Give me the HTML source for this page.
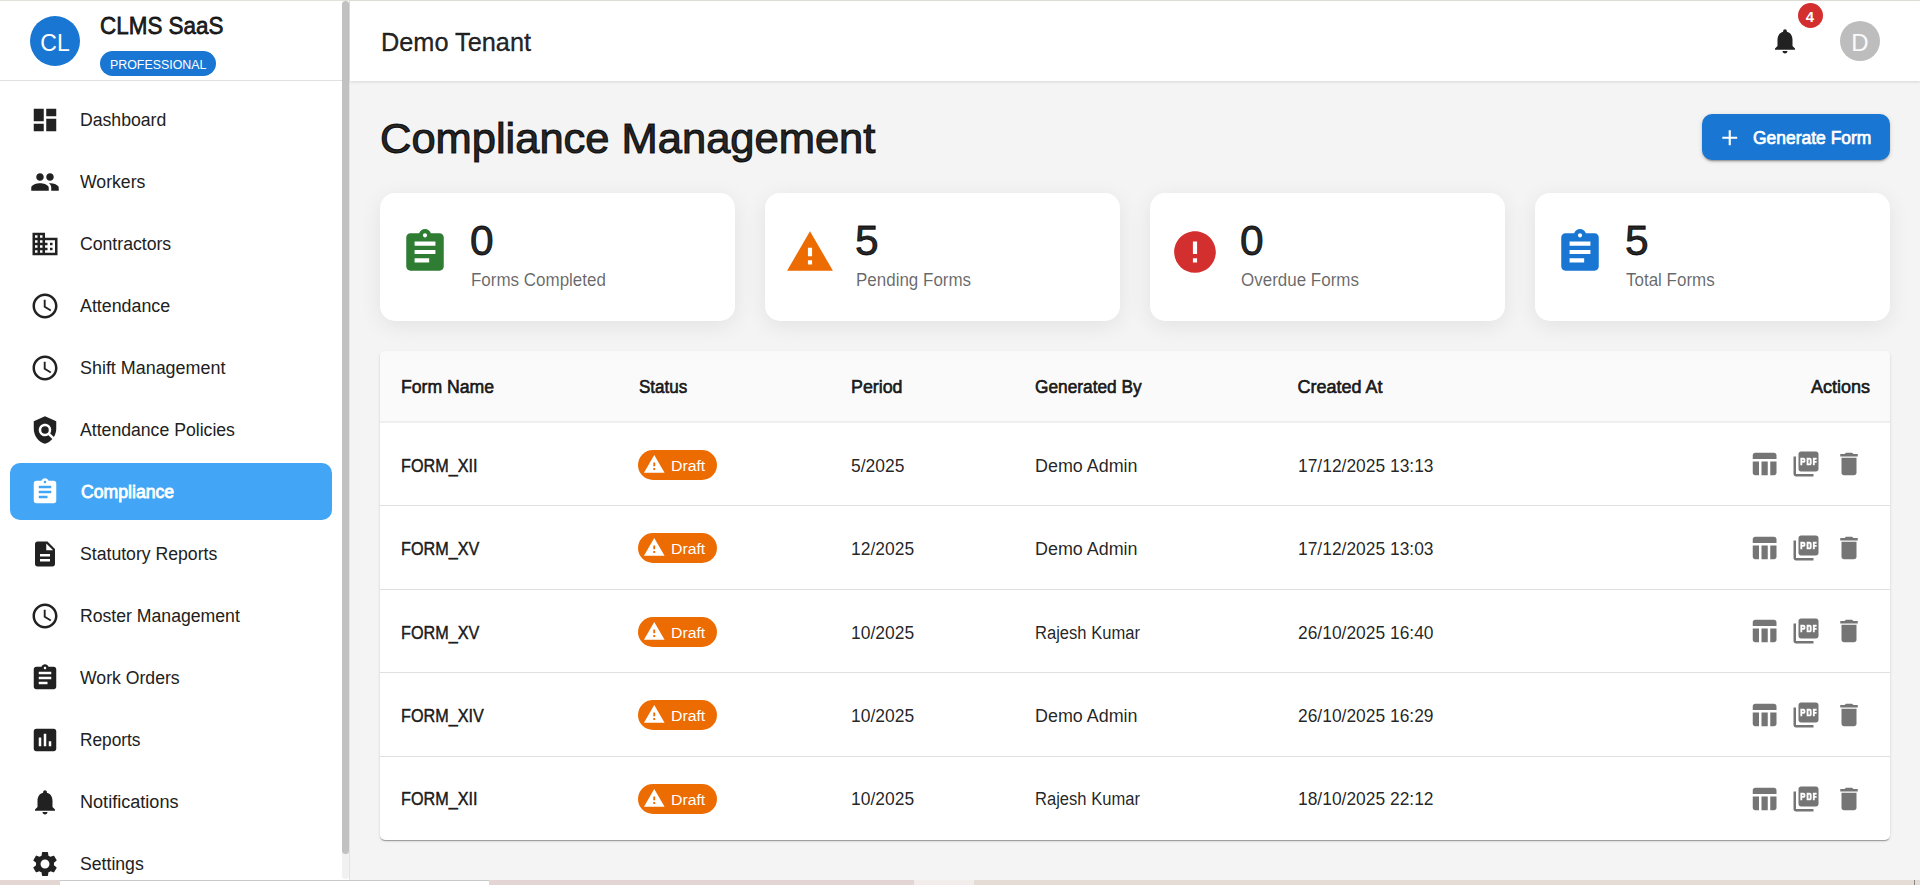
<!DOCTYPE html>
<html><head><meta charset="utf-8"><title>Compliance Management</title>
<style>
html,body{margin:0;padding:0;width:1920px;height:885px;overflow:hidden;background:#f4f4f4;font-family:"Liberation Sans", sans-serif;}
*{box-sizing:border-box;}
.abs{position:absolute;}
</style></head><body>
<div class="abs" style="left:0;top:0;width:1920px;height:1px;background:#dfe2d9"></div>
<div class="abs" style="left:0;top:1px;width:350px;height:879px;background:#fff;border-right:1px solid #e3e3e3"></div>
<div class="abs" style="left:0;top:80px;width:342px;height:1px;background:#e0e0e0"></div>
<div class="abs" style="left:342px;top:1px;width:7px;height:878px;background:#f1f1f1;border-radius:4px"></div>
<div class="abs" style="left:342px;top:1px;width:7px;height:853px;background:#c1c1c1;border-radius:4px"></div>
<div class="abs" style="left:30px;top:16px;width:50px;height:50px;border-radius:50%;background:#1976d2"></div>
<div style="position:absolute;top:31.53px;font-size:23px;line-height:23px;font-weight:400;color:#fff;white-space:nowrap;left:55.00px;width:0;display:flex;justify-content:center;">CL</div>
<div style="position:absolute;top:14.08px;font-size:24px;line-height:24px;font-weight:400;color:rgba(0,0,0,0.87);white-space:nowrap;left:100.00px;transform:scaleX(0.935);transform-origin:left center;-webkit-text-stroke:0.8px rgba(0,0,0,0.87);">CLMS SaaS</div>
<div class="abs" style="left:100px;top:51px;width:116px;height:25px;border-radius:13px;background:#1976d2"></div>
<div style="position:absolute;top:57.58px;font-size:13.2px;line-height:13.2px;font-weight:400;color:#fff;white-space:nowrap;left:110.00px;transform:scaleX(0.94);transform-origin:left center;">PROFESSIONAL</div>
<svg style="position:absolute;left:30px;top:105px" width="30" height="30" viewBox="0 0 24 24"><path fill="#212121" d="M3 13h8V3H3zm0 8h8v-6H3zm10 0h8V11h-8zm0-18v6h8V3z"/></svg>
<div style="position:absolute;top:111.06px;font-size:18px;line-height:18px;font-weight:400;color:#212121;white-space:nowrap;left:80.30px;transform:scaleX(0.98);transform-origin:left center;">Dashboard</div>
<svg style="position:absolute;left:30px;top:167px" width="30" height="30" viewBox="0 0 24 24"><path fill="#212121" d="M16 11c1.66 0 2.99-1.34 2.99-3S17.66 5 16 5c-1.66 0-3 1.34-3 3s1.34 3 3 3m-8 0c1.66 0 2.99-1.34 2.99-3S9.66 5 8 5C6.34 5 5 6.34 5 8s1.34 3 3 3m0 2c-2.33 0-7 1.17-7 3.5V19h14v-2.5c0-2.33-4.67-3.5-7-3.5m8 0c-.29 0-.62.02-.97.05 1.16.84 1.97 1.97 1.97 3.45V19h6v-2.5c0-2.33-4.67-3.5-7-3.5"/></svg>
<div style="position:absolute;top:173.06px;font-size:18px;line-height:18px;font-weight:400;color:#212121;white-space:nowrap;left:80.30px;transform:scaleX(0.98);transform-origin:left center;">Workers</div>
<svg style="position:absolute;left:30px;top:229px" width="30" height="30" viewBox="0 0 24 24"><path fill="#212121" d="M12 7V3H2v18h20V7zM6 19H4v-2h2zm0-4H4v-2h2zm0-4H4V9h2zm0-4H4V5h2zm4 12H8v-2h2zm0-4H8v-2h2zm0-4H8V9h2zm0-4H8V5h2zm10 12h-8v-2h2v-2h-2v-2h2v-2h-2V9h8zm-2-8h-2v2h2zm0 4h-2v2h2z"/></svg>
<div style="position:absolute;top:235.06px;font-size:18px;line-height:18px;font-weight:400;color:#212121;white-space:nowrap;left:80.30px;transform:scaleX(0.98);transform-origin:left center;">Contractors</div>
<svg style="position:absolute;left:30px;top:291px" width="30" height="30" viewBox="0 0 24 24"><path fill="#212121" d="M11.99 2C6.47 2 2 6.48 2 12s4.47 10 9.99 10C17.52 22 22 17.52 22 12S17.52 2 11.99 2M12 20c-4.42 0-8-3.58-8-8s3.58-8 8-8 8 3.58 8 8-3.58 8-8 8M12.5 7H11v6l5.25 3.15.75-1.23-4.5-2.67z"/></svg>
<div style="position:absolute;top:297.06px;font-size:18px;line-height:18px;font-weight:400;color:#212121;white-space:nowrap;left:80.30px;transform:scaleX(0.99);transform-origin:left center;">Attendance</div>
<svg style="position:absolute;left:30px;top:353px" width="30" height="30" viewBox="0 0 24 24"><path fill="#212121" d="M11.99 2C6.47 2 2 6.48 2 12s4.47 10 9.99 10C17.52 22 22 17.52 22 12S17.52 2 11.99 2M12 20c-4.42 0-8-3.58-8-8s3.58-8 8-8 8 3.58 8 8-3.58 8-8 8M12.5 7H11v6l5.25 3.15.75-1.23-4.5-2.67z"/></svg>
<div style="position:absolute;top:359.06px;font-size:18px;line-height:18px;font-weight:400;color:#212121;white-space:nowrap;left:80.30px;transform:scaleX(0.995);transform-origin:left center;">Shift Management</div>
<svg style="position:absolute;left:30px;top:415px" width="30" height="30" viewBox="0 0 24 24"><path fill="#212121" d="M21 5l-9-4-9 4v6c0 5.55 3.84 10.74 9 12 2.3-.56 4.33-1.9 5.88-3.71l-3.12-3.12c-1.94 1.29-4.58 1.07-6.29-.64-1.95-1.95-1.95-5.12 0-7.07s5.12-1.95 7.07 0c1.71 1.71 1.92 4.35.64 6.29l2.9 2.9C20.29 15.69 21 13.38 21 11zM12 9a3 3 0 1 0 0 6 3 3 0 1 0 0-6"/></svg>
<div style="position:absolute;top:421.06px;font-size:18px;line-height:18px;font-weight:400;color:#212121;white-space:nowrap;left:80.30px;transform:scaleX(0.98);transform-origin:left center;">Attendance Policies</div>
<div class="abs" style="left:10px;top:463px;width:322px;height:57px;border-radius:10px;background:#42a5f5"></div>
<svg style="position:absolute;left:30px;top:477px" width="30" height="30" viewBox="0 0 24 24"><path fill="#fff" d="M19 3h-4.18C14.4 1.84 13.3 1 12 1s-2.4.84-2.82 2H5c-1.1 0-2 .9-2 2v14c0 1.1.9 2 2 2h14c1.1 0 2-.9 2-2V5c0-1.1-.9-2-2-2m-7 0c.55 0 1 .45 1 1s-.45 1-1 1-1-.45-1-1 .45-1 1-1m2 14H7v-2h7zm3-4H7v-2h10zm0-4H7V7h10z"/></svg>
<div style="position:absolute;top:483.06px;font-size:18px;line-height:18px;font-weight:400;color:#fff;white-space:nowrap;left:80.50px;transform:scaleX(0.98);transform-origin:left center;-webkit-text-stroke:0.8px #fff;">Compliance</div>
<svg style="position:absolute;left:30px;top:539px" width="30" height="30" viewBox="0 0 24 24"><path fill="#212121" d="M14 2H6c-1.1 0-1.99.9-1.99 2L4 20c0 1.1.89 2 1.99 2H18c1.1 0 2-.9 2-2V8zm2 16H8v-2h8zm0-4H8v-2h8zm-3-5V3.5L18.5 9z"/></svg>
<div style="position:absolute;top:545.06px;font-size:18px;line-height:18px;font-weight:400;color:#212121;white-space:nowrap;left:80.30px;transform:scaleX(0.98);transform-origin:left center;">Statutory Reports</div>
<svg style="position:absolute;left:30px;top:601px" width="30" height="30" viewBox="0 0 24 24"><path fill="#212121" d="M11.99 2C6.47 2 2 6.48 2 12s4.47 10 9.99 10C17.52 22 22 17.52 22 12S17.52 2 11.99 2M12 20c-4.42 0-8-3.58-8-8s3.58-8 8-8 8 3.58 8 8-3.58 8-8 8M12.5 7H11v6l5.25 3.15.75-1.23-4.5-2.67z"/></svg>
<div style="position:absolute;top:607.06px;font-size:18px;line-height:18px;font-weight:400;color:#212121;white-space:nowrap;left:80.30px;transform:scaleX(0.98);transform-origin:left center;">Roster Management</div>
<svg style="position:absolute;left:30px;top:663px" width="30" height="30" viewBox="0 0 24 24"><path fill="#212121" d="M19 3h-4.18C14.4 1.84 13.3 1 12 1s-2.4.84-2.82 2H5c-1.1 0-2 .9-2 2v14c0 1.1.9 2 2 2h14c1.1 0 2-.9 2-2V5c0-1.1-.9-2-2-2m-7 0c.55 0 1 .45 1 1s-.45 1-1 1-1-.45-1-1 .45-1 1-1m2 14H7v-2h7zm3-4H7v-2h10zm0-4H7V7h10z"/></svg>
<div style="position:absolute;top:669.06px;font-size:18px;line-height:18px;font-weight:400;color:#212121;white-space:nowrap;left:80.30px;transform:scaleX(0.98);transform-origin:left center;">Work Orders</div>
<svg style="position:absolute;left:30px;top:725px" width="30" height="30" viewBox="0 0 24 24"><path fill="#212121" d="M19 3H5c-1.1 0-2 .9-2 2v14c0 1.1.9 2 2 2h14c1.1 0 2-.9 2-2V5c0-1.1-.9-2-2-2M9 17H7v-7h2zm4 0h-2V7h2zm4 0h-2v-4h2z"/></svg>
<div style="position:absolute;top:731.06px;font-size:18px;line-height:18px;font-weight:400;color:#212121;white-space:nowrap;left:80.30px;transform:scaleX(0.96);transform-origin:left center;">Reports</div>
<svg style="position:absolute;left:30px;top:787px" width="30" height="30" viewBox="0 0 24 24"><path fill="#212121" d="M12 22c1.1 0 2-.9 2-2h-4c0 1.1.89 2 2 2m6-6v-5c0-3.07-1.64-5.64-4.5-6.32V4c0-.83-.67-1.5-1.5-1.5s-1.5.67-1.5 1.5v.68C7.63 5.36 6 7.92 6 11v5l-2 2v1h16v-1z"/></svg>
<div style="position:absolute;top:793.06px;font-size:18px;line-height:18px;font-weight:400;color:#212121;white-space:nowrap;left:80.30px;transform:scaleX(1.005);transform-origin:left center;">Notifications</div>
<svg style="position:absolute;left:30px;top:849px" width="30" height="30" viewBox="0 0 24 24"><path fill="#212121" d="M19.14 12.94c.04-.3.06-.61.06-.94 0-.32-.02-.64-.07-.94l2.03-1.58c.18-.14.23-.41.12-.61l-1.92-3.32c-.12-.22-.37-.29-.59-.22l-2.39.96c-.5-.38-1.03-.7-1.62-.94l-.36-2.54c-.04-.24-.24-.41-.48-.41h-3.84c-.24 0-.43.17-.47.41l-.36 2.54c-.59.24-1.13.57-1.62.94l-2.39-.96c-.22-.08-.47 0-.59.22L2.74 8.87c-.12.21-.08.47.12.61l2.03 1.58c-.05.3-.09.63-.09.94s.02.64.07.94l-2.03 1.58c-.18.14-.23.41-.12.61l1.92 3.32c.12.22.37.29.59.22l2.39-.96c.5.38 1.03.7 1.62.94l.36 2.54c.05.24.24.41.48.41h3.84c.24 0 .44-.17.47-.41l.36-2.54c.59-.24 1.13-.56 1.62-.94l2.39.96c.22.08.47 0 .59-.22l1.92-3.32c.12-.22.07-.47-.12-.61zM12 15.6c-1.98 0-3.6-1.62-3.6-3.6s1.62-3.6 3.6-3.6 3.6 1.62 3.6 3.6-1.62 3.6-3.6 3.6"/></svg>
<div style="position:absolute;top:855.06px;font-size:18px;line-height:18px;font-weight:400;color:#212121;white-space:nowrap;left:80.30px;transform:scaleX(0.98);transform-origin:left center;">Settings</div>
<div class="abs" style="left:350px;top:1px;width:1570px;height:80px;background:#fff;box-shadow:0 1px 3px rgba(0,0,0,0.12)"></div>
<div style="position:absolute;top:29.74px;font-size:25px;line-height:25px;font-weight:400;color:rgba(0,0,0,0.87);white-space:nowrap;left:380.50px;transform:scaleX(1.012);transform-origin:left center;-webkit-text-stroke:0.35px rgba(0,0,0,0.87);">Demo Tenant</div>
<svg style="position:absolute;left:1770px;top:26px" width="30" height="30" viewBox="0 0 24 24"><path fill="#212121" d="M12 22c1.1 0 2-.9 2-2h-4c0 1.1.89 2 2 2m6-6v-5c0-3.07-1.64-5.64-4.5-6.32V4c0-.83-.67-1.5-1.5-1.5s-1.5.67-1.5 1.5v.68C7.63 5.36 6 7.92 6 11v5l-2 2v1h16v-1z"/></svg>
<div class="abs" style="left:1797.5px;top:3px;width:25px;height:25px;border-radius:50%;background:#d32f2f"></div>
<div style="position:absolute;top:8.80px;font-size:15px;line-height:15px;font-weight:700;color:#fff;white-space:nowrap;left:1810.00px;width:0;display:flex;justify-content:center;">4</div>
<div class="abs" style="left:1840px;top:21px;width:40px;height:40px;border-radius:50%;background:#bdbdbd"></div>
<div style="position:absolute;top:31.48px;font-size:24px;line-height:24px;font-weight:400;color:#fafafa;white-space:nowrap;left:1860.00px;width:0;display:flex;justify-content:center;">D</div>
<div style="position:absolute;top:118.05px;font-size:42px;line-height:42px;font-weight:400;color:rgba(0,0,0,0.87);white-space:nowrap;left:380.30px;transform:scaleX(1.035);transform-origin:left center;-webkit-text-stroke:1.1px rgba(0,0,0,0.87);">Compliance Management</div>
<div class="abs" style="left:1702px;top:114px;width:188px;height:46px;border-radius:10px;background:#1976d2;box-shadow:0 3px 1px -2px rgba(0,0,0,0.2),0 2px 2px 0 rgba(0,0,0,0.14),0 1px 5px 0 rgba(0,0,0,0.12)"></div>
<svg style="position:absolute;left:1717px;top:125px" width="25.5" height="25.5" viewBox="0 0 24 24"><path fill="#fff" d="M19 13h-6v6h-2v-6H5v-2h6V5h2v6h6z"/></svg>
<div style="position:absolute;top:128.76px;font-size:18px;line-height:18px;font-weight:400;color:#fff;white-space:nowrap;left:1752.50px;transform:scaleX(0.97);transform-origin:left center;-webkit-text-stroke:0.7px #fff;">Generate Form</div>
<div class="abs" style="left:380px;top:193px;width:355px;height:128px;border-radius:15px;background:#fff;box-shadow:0 5px 22px rgba(0,0,0,0.075)"></div>
<svg style="position:absolute;left:400px;top:227px" width="50" height="50" viewBox="0 0 24 24"><path fill="#2e7d32" d="M19 3h-4.18C14.4 1.84 13.3 1 12 1s-2.4.84-2.82 2H5c-1.1 0-2 .9-2 2v14c0 1.1.9 2 2 2h14c1.1 0 2-.9 2-2V5c0-1.1-.9-2-2-2m-7 0c.55 0 1 .45 1 1s-.45 1-1 1-1-.45-1-1 .45-1 1-1m2 14H7v-2h7zm3-4H7v-2h10zm0-4H7V7h10z"/></svg>
<div style="position:absolute;top:219.72px;font-size:42.5px;line-height:42.5px;font-weight:400;color:rgba(0,0,0,0.87);white-space:nowrap;left:470.00px;-webkit-text-stroke:0.9px rgba(0,0,0,0.87);">0</div>
<div style="position:absolute;top:271.69px;font-size:17.5px;line-height:17.5px;font-weight:400;color:rgba(0,0,0,0.6);white-space:nowrap;left:470.50px;transform:scaleX(0.97);transform-origin:left center;">Forms Completed</div>
<div class="abs" style="left:765px;top:193px;width:355px;height:128px;border-radius:15px;background:#fff;box-shadow:0 5px 22px rgba(0,0,0,0.075)"></div>
<svg style="position:absolute;left:785px;top:227px" width="50" height="50" viewBox="0 0 24 24"><path fill="#ed6c02" d="M1 21h22L12 2zm12-3h-2v-2h2zm0-4h-2v-4h2z"/></svg>
<div style="position:absolute;top:219.72px;font-size:42.5px;line-height:42.5px;font-weight:400;color:rgba(0,0,0,0.87);white-space:nowrap;left:855.00px;-webkit-text-stroke:0.9px rgba(0,0,0,0.87);">5</div>
<div style="position:absolute;top:271.69px;font-size:17.5px;line-height:17.5px;font-weight:400;color:rgba(0,0,0,0.6);white-space:nowrap;left:855.50px;transform:scaleX(0.97);transform-origin:left center;">Pending Forms</div>
<div class="abs" style="left:1150px;top:193px;width:355px;height:128px;border-radius:15px;background:#fff;box-shadow:0 5px 22px rgba(0,0,0,0.075)"></div>
<svg style="position:absolute;left:1170px;top:227px" width="50" height="50" viewBox="0 0 24 24"><path fill="#d32f2f" d="M12 2C6.48 2 2 6.48 2 12s4.48 10 10 10 10-4.48 10-10S17.52 2 12 2m1 15h-2v-2h2zm0-4h-2V7h2z"/></svg>
<div style="position:absolute;top:219.72px;font-size:42.5px;line-height:42.5px;font-weight:400;color:rgba(0,0,0,0.87);white-space:nowrap;left:1240.00px;-webkit-text-stroke:0.9px rgba(0,0,0,0.87);">0</div>
<div style="position:absolute;top:271.69px;font-size:17.5px;line-height:17.5px;font-weight:400;color:rgba(0,0,0,0.6);white-space:nowrap;left:1240.50px;transform:scaleX(0.97);transform-origin:left center;">Overdue Forms</div>
<div class="abs" style="left:1535px;top:193px;width:355px;height:128px;border-radius:15px;background:#fff;box-shadow:0 5px 22px rgba(0,0,0,0.075)"></div>
<svg style="position:absolute;left:1555px;top:227px" width="50" height="50" viewBox="0 0 24 24"><path fill="#1976d2" d="M19 3h-4.18C14.4 1.84 13.3 1 12 1s-2.4.84-2.82 2H5c-1.1 0-2 .9-2 2v14c0 1.1.9 2 2 2h14c1.1 0 2-.9 2-2V5c0-1.1-.9-2-2-2m-7 0c.55 0 1 .45 1 1s-.45 1-1 1-1-.45-1-1 .45-1 1-1m2 14H7v-2h7zm3-4H7v-2h10zm0-4H7V7h10z"/></svg>
<div style="position:absolute;top:219.72px;font-size:42.5px;line-height:42.5px;font-weight:400;color:rgba(0,0,0,0.87);white-space:nowrap;left:1625.00px;-webkit-text-stroke:0.9px rgba(0,0,0,0.87);">5</div>
<div style="position:absolute;top:271.69px;font-size:17.5px;line-height:17.5px;font-weight:400;color:rgba(0,0,0,0.6);white-space:nowrap;left:1625.50px;transform:scaleX(0.97);transform-origin:left center;">Total Forms</div>
<div class="abs" style="left:380px;top:351px;width:1510px;height:489px;border-radius:5px;background:#fff;box-shadow:0 2px 1px -1px rgba(0,0,0,0.2),0 1px 1px 0 rgba(0,0,0,0.14),0 1px 3px 0 rgba(0,0,0,0.12);overflow:hidden">
<div class="abs" style="left:0;top:0;width:1510px;height:70px;background:#fafafa"></div>
<div class="abs" style="left:0;top:70px;width:1510px;height:2px;background:#efefef"></div>
<div class="abs" style="left:0;top:154.0px;width:1510px;height:1px;background:#e0e0e0"></div>
<div class="abs" style="left:0;top:238.0px;width:1510px;height:1px;background:#e0e0e0"></div>
<div class="abs" style="left:0;top:321.0px;width:1510px;height:1px;background:#e0e0e0"></div>
<div class="abs" style="left:0;top:405.0px;width:1510px;height:1px;background:#e0e0e0"></div>
</div>
<div style="position:absolute;top:377.76px;font-size:18px;line-height:18px;font-weight:400;color:rgba(0,0,0,0.87);white-space:nowrap;left:400.50px;transform:scaleX(0.98);transform-origin:left center;-webkit-text-stroke:0.65px rgba(0,0,0,0.87);">Form Name</div>
<div style="position:absolute;top:377.76px;font-size:18px;line-height:18px;font-weight:400;color:rgba(0,0,0,0.87);white-space:nowrap;left:638.50px;transform:scaleX(0.945);transform-origin:left center;-webkit-text-stroke:0.65px rgba(0,0,0,0.87);">Status</div>
<div style="position:absolute;top:377.76px;font-size:18px;line-height:18px;font-weight:400;color:rgba(0,0,0,0.87);white-space:nowrap;left:850.50px;transform:scaleX(0.99);transform-origin:left center;-webkit-text-stroke:0.65px rgba(0,0,0,0.87);">Period</div>
<div style="position:absolute;top:377.76px;font-size:18px;line-height:18px;font-weight:400;color:rgba(0,0,0,0.87);white-space:nowrap;left:1035.00px;transform:scaleX(0.96);transform-origin:left center;-webkit-text-stroke:0.65px rgba(0,0,0,0.87);">Generated By</div>
<div style="position:absolute;top:377.76px;font-size:18px;line-height:18px;font-weight:400;color:rgba(0,0,0,0.87);white-space:nowrap;left:1297.50px;-webkit-text-stroke:0.65px rgba(0,0,0,0.87);">Created At</div>
<div style="position:absolute;top:377.76px;font-size:18px;line-height:18px;font-weight:400;color:rgba(0,0,0,0.87);white-space:nowrap;right:50.00px;-webkit-text-stroke:0.65px rgba(0,0,0,0.87);">Actions</div>
<div style="position:absolute;top:456.51px;font-size:18px;line-height:18px;font-weight:400;color:rgba(0,0,0,0.87);white-space:nowrap;left:400.50px;transform:scaleX(0.9);transform-origin:left center;-webkit-text-stroke:0.5px rgba(0,0,0,0.87);">FORM_XII</div>
<div class="abs" style="left:638px;top:450px;width:79px;height:30px;border-radius:15px;background:#ed6c02"></div>
<svg style="position:absolute;left:642.75px;top:452.9px" width="22.5" height="22.5" viewBox="0 0 24 24"><path fill="#fff" d="M1 21h22L12 2zm12-3h-2v-2h2zm0-4h-2v-4h2z"/></svg>
<div style="position:absolute;top:458.08px;font-size:15.5px;line-height:15.5px;font-weight:400;color:#fff;white-space:nowrap;left:671.30px;transform:scaleX(1.02);transform-origin:left center;">Draft</div>
<div style="position:absolute;top:456.51px;font-size:18px;line-height:18px;font-weight:400;color:rgba(0,0,0,0.87);white-space:nowrap;left:850.50px;transform:scaleX(0.97);transform-origin:left center;">5/2025</div>
<div style="position:absolute;top:456.51px;font-size:18px;line-height:18px;font-weight:400;color:rgba(0,0,0,0.87);white-space:nowrap;left:1035.00px;transform:scaleX(0.995);transform-origin:left center;">Demo Admin</div>
<div style="position:absolute;top:456.51px;font-size:18px;line-height:18px;font-weight:400;color:rgba(0,0,0,0.87);white-space:nowrap;left:1297.50px;transform:scaleX(0.967);transform-origin:left center;">17/12/2025 13:13</div>
<svg style="position:absolute;left:1749px;top:449px" width="30" height="30" viewBox="0 0 24 24"><path fill="#757575" d="M10 10.02h5V21h-5zM17 21h3c1.1 0 2-.9 2-2v-9h-5zm3-18H5c-1.1 0-2 .9-2 2v3h19V5c0-1.1-.9-2-2-2M3 19c0 1.1.9 2 2 2h3V10H3z"/></svg>
<svg style="position:absolute;left:1791px;top:449px" width="30" height="30" viewBox="0 0 24 24"><path fill="#757575" d="M20 2H8c-1.1 0-2 .9-2 2v12c0 1.1.9 2 2 2h12c1.1 0 2-.9 2-2V4c0-1.1-.9-2-2-2m-8.5 7.5c0 .83-.67 1.5-1.5 1.5H9v2H7.5V7H10c.83 0 1.5.67 1.5 1.5zm5 2c0 .83-.67 1.5-1.5 1.5h-2.5V7H15c.83 0 1.5.67 1.5 1.5zm4-3H19v1h1.5V11H19v2h-1.5V7h3zM9 9.5h1v-1H9zM4 6H2v14c0 1.1.9 2 2 2h14v-2H4zm10 5.5h1v-3h-1z"/></svg>
<svg style="position:absolute;left:1834px;top:449px" width="30" height="30" viewBox="0 0 24 24"><path fill="#757575" d="M6 19c0 1.1.9 2 2 2h8c1.1 0 2-.9 2-2V7H6zM19 4h-3.5l-1-1h-5l-1 1H5v2h14z"/></svg>
<div style="position:absolute;top:539.76px;font-size:18px;line-height:18px;font-weight:400;color:rgba(0,0,0,0.87);white-space:nowrap;left:400.50px;transform:scaleX(0.9);transform-origin:left center;-webkit-text-stroke:0.5px rgba(0,0,0,0.87);">FORM_XV</div>
<div class="abs" style="left:638px;top:533px;width:79px;height:30px;border-radius:15px;background:#ed6c02"></div>
<svg style="position:absolute;left:642.75px;top:535.9px" width="22.5" height="22.5" viewBox="0 0 24 24"><path fill="#fff" d="M1 21h22L12 2zm12-3h-2v-2h2zm0-4h-2v-4h2z"/></svg>
<div style="position:absolute;top:541.08px;font-size:15.5px;line-height:15.5px;font-weight:400;color:#fff;white-space:nowrap;left:671.30px;transform:scaleX(1.02);transform-origin:left center;">Draft</div>
<div style="position:absolute;top:539.76px;font-size:18px;line-height:18px;font-weight:400;color:rgba(0,0,0,0.87);white-space:nowrap;left:850.50px;transform:scaleX(0.97);transform-origin:left center;">12/2025</div>
<div style="position:absolute;top:539.76px;font-size:18px;line-height:18px;font-weight:400;color:rgba(0,0,0,0.87);white-space:nowrap;left:1035.00px;transform:scaleX(0.995);transform-origin:left center;">Demo Admin</div>
<div style="position:absolute;top:539.76px;font-size:18px;line-height:18px;font-weight:400;color:rgba(0,0,0,0.87);white-space:nowrap;left:1297.50px;transform:scaleX(0.967);transform-origin:left center;">17/12/2025 13:03</div>
<svg style="position:absolute;left:1749px;top:533px" width="30" height="30" viewBox="0 0 24 24"><path fill="#757575" d="M10 10.02h5V21h-5zM17 21h3c1.1 0 2-.9 2-2v-9h-5zm3-18H5c-1.1 0-2 .9-2 2v3h19V5c0-1.1-.9-2-2-2M3 19c0 1.1.9 2 2 2h3V10H3z"/></svg>
<svg style="position:absolute;left:1791px;top:533px" width="30" height="30" viewBox="0 0 24 24"><path fill="#757575" d="M20 2H8c-1.1 0-2 .9-2 2v12c0 1.1.9 2 2 2h12c1.1 0 2-.9 2-2V4c0-1.1-.9-2-2-2m-8.5 7.5c0 .83-.67 1.5-1.5 1.5H9v2H7.5V7H10c.83 0 1.5.67 1.5 1.5zm5 2c0 .83-.67 1.5-1.5 1.5h-2.5V7H15c.83 0 1.5.67 1.5 1.5zm4-3H19v1h1.5V11H19v2h-1.5V7h3zM9 9.5h1v-1H9zM4 6H2v14c0 1.1.9 2 2 2h14v-2H4zm10 5.5h1v-3h-1z"/></svg>
<svg style="position:absolute;left:1834px;top:533px" width="30" height="30" viewBox="0 0 24 24"><path fill="#757575" d="M6 19c0 1.1.9 2 2 2h8c1.1 0 2-.9 2-2V7H6zM19 4h-3.5l-1-1h-5l-1 1H5v2h14z"/></svg>
<div style="position:absolute;top:623.76px;font-size:18px;line-height:18px;font-weight:400;color:rgba(0,0,0,0.87);white-space:nowrap;left:400.50px;transform:scaleX(0.9);transform-origin:left center;-webkit-text-stroke:0.5px rgba(0,0,0,0.87);">FORM_XV</div>
<div class="abs" style="left:638px;top:617px;width:79px;height:30px;border-radius:15px;background:#ed6c02"></div>
<svg style="position:absolute;left:642.75px;top:619.9px" width="22.5" height="22.5" viewBox="0 0 24 24"><path fill="#fff" d="M1 21h22L12 2zm12-3h-2v-2h2zm0-4h-2v-4h2z"/></svg>
<div style="position:absolute;top:625.08px;font-size:15.5px;line-height:15.5px;font-weight:400;color:#fff;white-space:nowrap;left:671.30px;transform:scaleX(1.02);transform-origin:left center;">Draft</div>
<div style="position:absolute;top:623.76px;font-size:18px;line-height:18px;font-weight:400;color:rgba(0,0,0,0.87);white-space:nowrap;left:850.50px;transform:scaleX(0.97);transform-origin:left center;">10/2025</div>
<div style="position:absolute;top:623.76px;font-size:18px;line-height:18px;font-weight:400;color:rgba(0,0,0,0.87);white-space:nowrap;left:1035.00px;transform:scaleX(0.92);transform-origin:left center;">Rajesh Kumar</div>
<div style="position:absolute;top:623.76px;font-size:18px;line-height:18px;font-weight:400;color:rgba(0,0,0,0.87);white-space:nowrap;left:1297.50px;transform:scaleX(0.967);transform-origin:left center;">26/10/2025 16:40</div>
<svg style="position:absolute;left:1749px;top:616px" width="30" height="30" viewBox="0 0 24 24"><path fill="#757575" d="M10 10.02h5V21h-5zM17 21h3c1.1 0 2-.9 2-2v-9h-5zm3-18H5c-1.1 0-2 .9-2 2v3h19V5c0-1.1-.9-2-2-2M3 19c0 1.1.9 2 2 2h3V10H3z"/></svg>
<svg style="position:absolute;left:1791px;top:616px" width="30" height="30" viewBox="0 0 24 24"><path fill="#757575" d="M20 2H8c-1.1 0-2 .9-2 2v12c0 1.1.9 2 2 2h12c1.1 0 2-.9 2-2V4c0-1.1-.9-2-2-2m-8.5 7.5c0 .83-.67 1.5-1.5 1.5H9v2H7.5V7H10c.83 0 1.5.67 1.5 1.5zm5 2c0 .83-.67 1.5-1.5 1.5h-2.5V7H15c.83 0 1.5.67 1.5 1.5zm4-3H19v1h1.5V11H19v2h-1.5V7h3zM9 9.5h1v-1H9zM4 6H2v14c0 1.1.9 2 2 2h14v-2H4zm10 5.5h1v-3h-1z"/></svg>
<svg style="position:absolute;left:1834px;top:616px" width="30" height="30" viewBox="0 0 24 24"><path fill="#757575" d="M6 19c0 1.1.9 2 2 2h8c1.1 0 2-.9 2-2V7H6zM19 4h-3.5l-1-1h-5l-1 1H5v2h14z"/></svg>
<div style="position:absolute;top:706.76px;font-size:18px;line-height:18px;font-weight:400;color:rgba(0,0,0,0.87);white-space:nowrap;left:400.50px;transform:scaleX(0.9);transform-origin:left center;-webkit-text-stroke:0.5px rgba(0,0,0,0.87);">FORM_XIV</div>
<div class="abs" style="left:638px;top:700px;width:79px;height:30px;border-radius:15px;background:#ed6c02"></div>
<svg style="position:absolute;left:642.75px;top:702.9px" width="22.5" height="22.5" viewBox="0 0 24 24"><path fill="#fff" d="M1 21h22L12 2zm12-3h-2v-2h2zm0-4h-2v-4h2z"/></svg>
<div style="position:absolute;top:708.08px;font-size:15.5px;line-height:15.5px;font-weight:400;color:#fff;white-space:nowrap;left:671.30px;transform:scaleX(1.02);transform-origin:left center;">Draft</div>
<div style="position:absolute;top:706.76px;font-size:18px;line-height:18px;font-weight:400;color:rgba(0,0,0,0.87);white-space:nowrap;left:850.50px;transform:scaleX(0.97);transform-origin:left center;">10/2025</div>
<div style="position:absolute;top:706.76px;font-size:18px;line-height:18px;font-weight:400;color:rgba(0,0,0,0.87);white-space:nowrap;left:1035.00px;transform:scaleX(0.995);transform-origin:left center;">Demo Admin</div>
<div style="position:absolute;top:706.76px;font-size:18px;line-height:18px;font-weight:400;color:rgba(0,0,0,0.87);white-space:nowrap;left:1297.50px;transform:scaleX(0.967);transform-origin:left center;">26/10/2025 16:29</div>
<svg style="position:absolute;left:1749px;top:700px" width="30" height="30" viewBox="0 0 24 24"><path fill="#757575" d="M10 10.02h5V21h-5zM17 21h3c1.1 0 2-.9 2-2v-9h-5zm3-18H5c-1.1 0-2 .9-2 2v3h19V5c0-1.1-.9-2-2-2M3 19c0 1.1.9 2 2 2h3V10H3z"/></svg>
<svg style="position:absolute;left:1791px;top:700px" width="30" height="30" viewBox="0 0 24 24"><path fill="#757575" d="M20 2H8c-1.1 0-2 .9-2 2v12c0 1.1.9 2 2 2h12c1.1 0 2-.9 2-2V4c0-1.1-.9-2-2-2m-8.5 7.5c0 .83-.67 1.5-1.5 1.5H9v2H7.5V7H10c.83 0 1.5.67 1.5 1.5zm5 2c0 .83-.67 1.5-1.5 1.5h-2.5V7H15c.83 0 1.5.67 1.5 1.5zm4-3H19v1h1.5V11H19v2h-1.5V7h3zM9 9.5h1v-1H9zM4 6H2v14c0 1.1.9 2 2 2h14v-2H4zm10 5.5h1v-3h-1z"/></svg>
<svg style="position:absolute;left:1834px;top:700px" width="30" height="30" viewBox="0 0 24 24"><path fill="#757575" d="M6 19c0 1.1.9 2 2 2h8c1.1 0 2-.9 2-2V7H6zM19 4h-3.5l-1-1h-5l-1 1H5v2h14z"/></svg>
<div style="position:absolute;top:790.26px;font-size:18px;line-height:18px;font-weight:400;color:rgba(0,0,0,0.87);white-space:nowrap;left:400.50px;transform:scaleX(0.9);transform-origin:left center;-webkit-text-stroke:0.5px rgba(0,0,0,0.87);">FORM_XII</div>
<div class="abs" style="left:638px;top:784px;width:79px;height:30px;border-radius:15px;background:#ed6c02"></div>
<svg style="position:absolute;left:642.75px;top:786.9px" width="22.5" height="22.5" viewBox="0 0 24 24"><path fill="#fff" d="M1 21h22L12 2zm12-3h-2v-2h2zm0-4h-2v-4h2z"/></svg>
<div style="position:absolute;top:792.08px;font-size:15.5px;line-height:15.5px;font-weight:400;color:#fff;white-space:nowrap;left:671.30px;transform:scaleX(1.02);transform-origin:left center;">Draft</div>
<div style="position:absolute;top:790.26px;font-size:18px;line-height:18px;font-weight:400;color:rgba(0,0,0,0.87);white-space:nowrap;left:850.50px;transform:scaleX(0.97);transform-origin:left center;">10/2025</div>
<div style="position:absolute;top:790.26px;font-size:18px;line-height:18px;font-weight:400;color:rgba(0,0,0,0.87);white-space:nowrap;left:1035.00px;transform:scaleX(0.92);transform-origin:left center;">Rajesh Kumar</div>
<div style="position:absolute;top:790.26px;font-size:18px;line-height:18px;font-weight:400;color:rgba(0,0,0,0.87);white-space:nowrap;left:1297.50px;transform:scaleX(0.967);transform-origin:left center;">18/10/2025 22:12</div>
<svg style="position:absolute;left:1749px;top:784px" width="30" height="30" viewBox="0 0 24 24"><path fill="#757575" d="M10 10.02h5V21h-5zM17 21h3c1.1 0 2-.9 2-2v-9h-5zm3-18H5c-1.1 0-2 .9-2 2v3h19V5c0-1.1-.9-2-2-2M3 19c0 1.1.9 2 2 2h3V10H3z"/></svg>
<svg style="position:absolute;left:1791px;top:784px" width="30" height="30" viewBox="0 0 24 24"><path fill="#757575" d="M20 2H8c-1.1 0-2 .9-2 2v12c0 1.1.9 2 2 2h12c1.1 0 2-.9 2-2V4c0-1.1-.9-2-2-2m-8.5 7.5c0 .83-.67 1.5-1.5 1.5H9v2H7.5V7H10c.83 0 1.5.67 1.5 1.5zm5 2c0 .83-.67 1.5-1.5 1.5h-2.5V7H15c.83 0 1.5.67 1.5 1.5zm4-3H19v1h1.5V11H19v2h-1.5V7h3zM9 9.5h1v-1H9zM4 6H2v14c0 1.1.9 2 2 2h14v-2H4zm10 5.5h1v-3h-1z"/></svg>
<svg style="position:absolute;left:1834px;top:784px" width="30" height="30" viewBox="0 0 24 24"><path fill="#757575" d="M6 19c0 1.1.9 2 2 2h8c1.1 0 2-.9 2-2V7H6zM19 4h-3.5l-1-1h-5l-1 1H5v2h14z"/></svg>
<div class="abs" style="left:0;top:880px;width:1920px;height:5px;background:#e6dcd6"></div>
<div class="abs" style="left:0;top:880px;width:60px;height:5px;background:#e3d6d3"></div>
<div class="abs" style="left:60px;top:880px;width:429px;height:5px;background:#fff;border-top:1px solid #c8cac9"></div>
<div class="abs" style="left:489px;top:880px;width:425px;height:5px;background:#e3d5d3"></div>
<div class="abs" style="left:914px;top:880px;width:60px;height:5px;background:#f2ecea"></div>
<div class="abs" style="left:1914px;top:880px;width:1px;height:5px;background:#888"></div>
</body></html>
